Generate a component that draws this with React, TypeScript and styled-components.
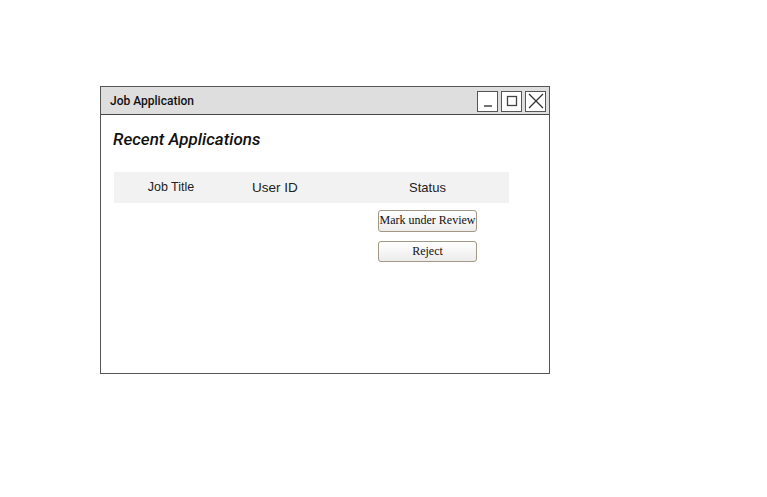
import * as React from "react";
import styled, {createGlobalStyle} from "styled-components";

const GlobalStyle = createGlobalStyle`
  html, body {
    margin: 0;
    padding: 0;
    background: #ffffff;
  }
`;

const Page = styled.div`
  width: 767px;
  height: 497px;
  padding: 86px 0 0 100px;
  box-sizing: border-box;
`;

const Window = styled.div`
  width: 450px;
  height: 288px;
  box-sizing: border-box;
  border: 1px solid #555555;
  display: flex;
  flex-direction: column;
  background: #ffffff;
`;

const TitleBar = styled.div`
  height: 28px;
  box-sizing: border-box;
  background: #dedede;
  border-bottom: 1px solid #444444;
  display: flex;
  align-items: center;
  justify-content: space-between;
  padding: 0 3px 0 9px;
`;

const TitleText = styled.span`
  font-family: Roboto, "Liberation Sans", sans-serif;
  font-size: 12px;
  font-weight: 500;
  color: #111111;
`;

const Controls = styled.div`
  display: flex;
  gap: 3px;
  margin-top: 1px;
`;

const ControlBox = styled.div`
  width: 21px;
  height: 21px;
  box-sizing: border-box;
  border: 1.5px solid #555555;
  background: #ffffff;
  display: flex;
  align-items: center;
  justify-content: center;
`;

const Content = styled.div`
  padding: 15px 0 0 12px;
  display: flex;
  flex-direction: column;
`;

const Heading = styled.h2`
  margin: 0;
  font-family: Roboto, "Liberation Sans", sans-serif;
  font-size: 17px;
  font-style: italic;
  font-weight: 500;
  color: #111111;
  line-height: 18px;
`;

const Table = styled.div`
  margin-top: 24px;
  margin-left: 1px;
  width: 395px;
  display: grid;
  grid-template-columns: 114px 118px 163px;
`;

const HeadCell = styled.div<{ $size: number; $align: "center" | "left"; $lift?: number }>`
  height: 31px;
  background: #f2f2f2;
  display: flex;
  align-items: center;
  justify-content: ${p => (p.$align === "center" ? "center" : "flex-start")};
  padding-left: ${p => (p.$align === "left" ? "24px" : "0")};
  padding-bottom: ${p => p.$lift ?? 0}px;
  box-sizing: border-box;
  font-family: "Liberation Sans", Arial, sans-serif;
  font-size: ${p => p.$size}px;
  color: #222222;
`;

const ActionCell = styled.div`
  grid-column: 3;
  display: flex;
  flex-direction: column;
  align-items: center;
  gap: 9px;
  padding-top: 7px;
`;

const ActionButton = styled.button`
  width: 99px;
  height: 21.5px;
  padding: 0;
  box-sizing: border-box;
  border: 1px solid #a39785;
  border-radius: 3px;
  background: linear-gradient(#ffffff, #ececec);
  font-family: "Liberation Serif", "Times New Roman", serif;
  font-size: 12px;
  color: #111111;
  white-space: nowrap;
  display: flex;
  align-items: center;
  justify-content: center;
`;

const App = () => {
    return (
        <>
            <GlobalStyle/>
            <Page>
                <Window>
                    <TitleBar>
                        <TitleText>Job Application</TitleText>
                        <Controls>
                            <ControlBox>
                                <svg width="14" height="14" viewBox="0 0 14 14">
                                    <line x1="3" y1="12" x2="11" y2="12" stroke="#444" strokeWidth="1.5"/>
                                </svg>
                            </ControlBox>
                            <ControlBox>
                                <svg width="14" height="14" viewBox="0 0 14 14">
                                    <rect x="2.5" y="2.5" width="9" height="9" fill="none" stroke="#444" strokeWidth="1.3"/>
                                </svg>
                            </ControlBox>
                            <ControlBox>
                                <svg width="16" height="16" viewBox="0 0 16 16">
                                    <line x1="1" y1="1" x2="15" y2="15" stroke="#333" strokeWidth="1.2"/>
                                    <line x1="15" y1="1" x2="1" y2="15" stroke="#333" strokeWidth="1.2"/>
                                </svg>
                            </ControlBox>
                        </Controls>
                    </TitleBar>
                    <Content>
                        <Heading>Recent Applications</Heading>
                        <Table>
                            <HeadCell $size={12.5} $align="center" $lift={2}>Job Title</HeadCell>
                            <HeadCell $size={13.5} $align="left">User ID</HeadCell>
                            <HeadCell $size={13} $align="center">Status</HeadCell>
                            <ActionCell>
                                <ActionButton>Mark under Review</ActionButton>
                                <ActionButton>Reject</ActionButton>
                            </ActionCell>
                        </Table>
                    </Content>
                </Window>
            </Page>
        </>
    );
};

export default App;
